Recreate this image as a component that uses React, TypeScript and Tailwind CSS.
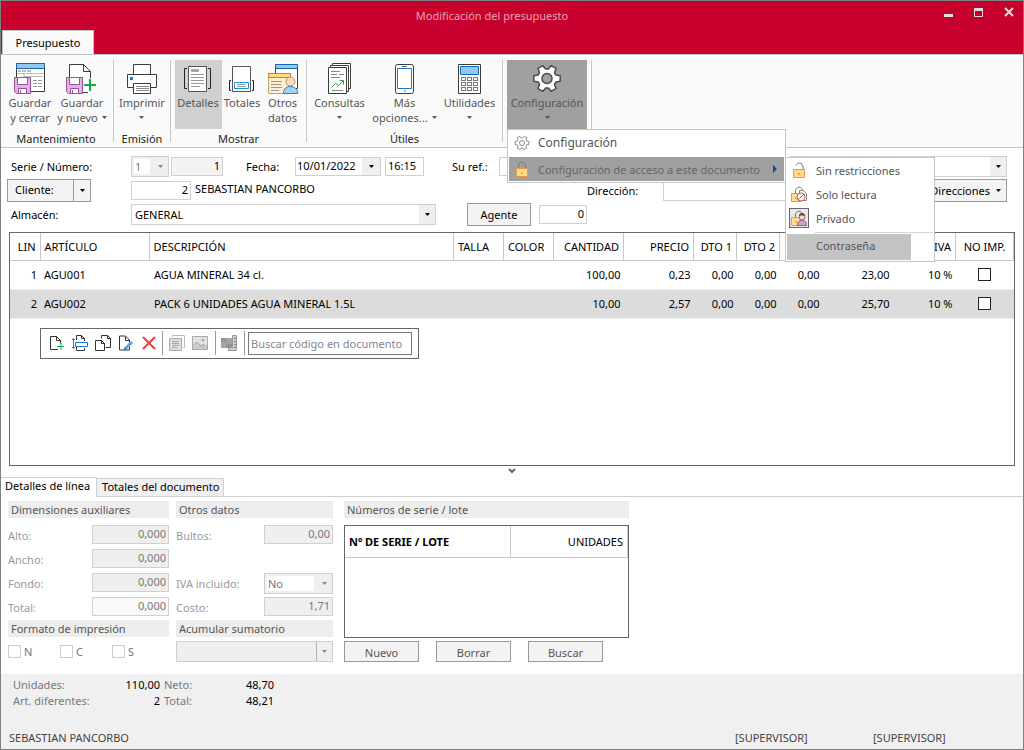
import type { ReactNode } from 'react';
import { clsx } from 'clsx';

/* ---------- shared data ---------- */

const LINES = [
  { lin: 1, code: 'AGU001', name: 'AGUA MINERAL 34 cl.', qty: '100,00', price: '0,23', total: '23,00' },
  { lin: 2, code: 'AGU002', name: 'PACK 6 UNIDADES AGUA MINERAL 1.5L', qty: '10,00', price: '2,57', total: '25,70' },
];

const DIMENSIONS = ['Alto:', 'Ancho:', 'Fondo:', 'Total:'];

function gearPath(cx: number, cy: number, outer: number, inner: number) {
  const points: string[] = [];
  for (let i = 0; i < 6; i++) {
    const steps = [
      [-22, inner],
      [-12, outer],
      [12, outer],
      [22, inner],
    ];
    steps.forEach(([offset, radius]) => {
      const a = ((i * 60 + offset) * Math.PI) / 180;
      points.push(`${(cx + radius * Math.cos(a)).toFixed(2)},${(cy + radius * Math.sin(a)).toFixed(2)}`);
    });
  }
  return `M${points.join('L')}Z`;
}

/* ---------- ribbon icons (32x32) ---------- */

function Icon({ children }: { children: ReactNode }) {
  return (
    <svg width="32" height="32" viewBox="0 0 32 32" fill="none" className="shrink-0" aria-hidden="true">
      {children}
    </svg>
  );
}

const Floppy = () => (
  <g stroke="#9b4f9f">
    <path d="M.5 15.5h16v16H2.5l-2-2z" fill="#dcb6dc" />
    <path d="M3.5 15.5h10v7h-10z" fill="#fff" />
    <path d="M4.5 26.5h8v5h-8z" fill="#fff" />
    <path d="M6.5 28v3" />
  </g>
);

const SaveCloseIcon = () => (
  <Icon>
    <path d="M2.5 1.5h28v28h-28z" fill="#fff" stroke="#3b3b3b" />
    <path d="M2.5 1.5h28v5h-28z" fill="#91c8f0" stroke="#1766ad" />
    <path d="M4 9h3M8 9h4M13 9h4" stroke="#777" />
    <path d="M3 11.5h27M10 11v4M10 14.5h19" stroke="#bbb" />
    <path d="M19 18.5h10M19 21.5h10M19 24.5h10" stroke="#999" strokeDasharray="4 1" />
    <Floppy />
  </Icon>
);

const SaveNewIcon = () => (
  <Icon>
    <path d="M3.5 30V2.5h14l7 7V30.5H10" fill="#fff" stroke="#3b3b3b" />
    <path d="M17.5 2.5v7h7z" fill="#fff" stroke="#3b3b3b" />
    <path d="M24 16v15M17 23.5h14" stroke="#fafafa" strokeWidth="4" />
    <Floppy />
    <path d="M24 17v12M18 23h12" stroke="#17a84b" strokeWidth="2" />
  </Icon>
);

const PrinterIcon = () => (
  <Icon>
    <g stroke="#3b3b3b" fill="#fff">
      <path d="M7.5 2.5h17v10h-17z" />
      <path d="M1.5 12.5h29v13h-29z" />
      <path d="M7.5 21.5h17v10h-17z" />
    </g>
    <path d="M4 15h3v3H4z" fill="#1979ca" />
    <path d="M10 24.5h13M10 26.5h13M10 28.5h13" stroke="#888" />
  </Icon>
);

const DetailsIcon = () => (
  <Icon>
    <path d="M6.5 4.5h18v25h-18z" fill="#fff" stroke="#555" />
    <path d="M5 6.5H2.5v20H5M26 6.5h2.5v20H26" stroke="#222" />
    <path d="M9 7h8v3H9z" fill="#aaa" />
    <path d="M9 12.5h13M9 15.5h13M9 18.5h13M9 21.5h13M9 24.5h9" stroke="#999" />
  </Icon>
);

const TotalsIcon = () => (
  <Icon>
    <path d="M6.5 4.5h18v25h-18z" fill="#fff" stroke="#555" />
    <path d="M5 18.5H3.5v10H5M26 18.5h1.5v10H26" stroke="#222" />
    <path d="M8.5 20.5h14v6h-14z" fill="#fff" stroke="#1b95d8" />
    <path d="M11 22.5h9M11 24.5h9" stroke="#999" />
  </Icon>
);

const OtherDataIcon = () => (
  <Icon>
    <path d="M8.5 2.5h22v24h-22z" fill="#fff" stroke="#3b3b3b" />
    <path d="M8.5 2.5h22v4h-22z" fill="#91c8f0" stroke="#1766ad" />
    <path d="M1.5 11.5h22v20h-22z" fill="#fdf0cf" stroke="#bba36d" />
    <path d="M1.5 11.5h22v4h-22z" fill="#ffd97c" stroke="#e0762a" />
    <path d="M4 19.5h11M4 22.5h10M4 25.5h11M4 28.5h8" stroke="#999" />
    <circle cx="23.5" cy="19.5" r="4.5" fill="#fbdcc0" stroke="#c08a63" />
    <path d="M16.5 31.5c0-5 3-7 7-7s7 2 7 7z" fill="#a5d1f0" stroke="#2b7dbd" />
  </Icon>
);

const QueriesIcon = () => (
  <Icon>
    <g stroke="#3b3b3b" fill="#fff">
      <path d="M8.5 1.5h18v25h-18z" />
      <path d="M6.5 3.5h18v26h-18z" />
      <path d="M4.5 5.5h18v26h-18z" />
    </g>
    <path d="M7 9.5h9M7 12.5h6M15 12.5h5M7 15.5h9M8 28.5h11" stroke="#888" />
    <path d="M7.5 25.5l4-4 3 2 5-5M15.5 18.5h4v4" stroke="#2fa336" />
  </Icon>
);

const PhoneIcon = () => (
  <Icon>
    <rect x="6.5" y="2.5" width="18" height="29" rx="2" fill="#fff" stroke="#3b3b3b" />
    <path d="M8.5 6.5h14v20h-14z" fill="#fff" stroke="#1979ca" />
    <path d="M13 4.5h5M15 29h2" stroke="#666" />
  </Icon>
);

const CalculatorIcon = () => (
  <Icon>
    <path d="M4.5 2.5h22v29h-22z" fill="#fff" stroke="#3b3b3b" />
    <path d="M6.5 4.5h18v8h-18z" fill="#91c8f0" stroke="#1766ad" />
    <g stroke="#777">
      {[15.5, 20.5, 25.5].map((y) =>
        [7.5, 13.5, 19.5].map((x) => <rect key={`${x}-${y}`} x={x} y={y} width="4" height="3" fill="#fff" />),
      )}
    </g>
  </Icon>
);

const GearIcon = () => (
  <Icon>
    <path d={gearPath(16, 16.5, 13.5, 9.5)} fill="#fff" stroke="#4a4a4a" strokeWidth="1.5" strokeLinejoin="round" />
    <circle cx="16" cy="16.5" r="5" fill="#a0a0a0" stroke="#4a4a4a" strokeWidth="1.5" />
  </Icon>
);

/* ---------- small icons (16x16) ---------- */

function SmallIcon({ children }: { children: ReactNode }) {
  return (
    <svg width="16" height="16" viewBox="0 0 16 16" fill="none" className="shrink-0" aria-hidden="true">
      {children}
    </svg>
  );
}

const SmallGear = () => (
  <SmallIcon>
    <path d={gearPath(8, 8, 7, 5)} fill="#fff" stroke="#8a8a8a" strokeLinejoin="round" />
    <circle cx="8" cy="8" r="2.5" stroke="#8a8a8a" />
  </SmallIcon>
);

const Lock = ({ open, small }: { open?: boolean; small?: boolean }) => (
  <g>
    <path
      d={open ? 'M5 3.5C6 0 12 0 12 5v3' : 'M4.5 8V5c0-5 7-5 7 0v3'}
      stroke="#777"
    />
    <path d={small ? 'M.5 7.5h10v8H.5z' : 'M2.5 7.5h11v8h-11z'} fill="#ffdc8b" stroke="#e89a4a" />
    <path d={small ? 'M5 11v2' : 'M8 11v2'} stroke="#d97b29" />
  </g>
);

const ReadOnlyIcon = () => (
  <SmallIcon>
    <Lock small />
    <path d="M8.5 4.5h4l3 3v7h-7z" fill="#fff" stroke="#888" />
    <circle cx="10" cy="11" r="4" fill="#fff" stroke="#dc5550" />
    <path d="M7 14l6-6" stroke="#dc5550" />
  </SmallIcon>
);

const PrivateIcon = () => (
  <SmallIcon>
    <Lock small />
    <path d="M6.5 15.5c0-4 2-5 4.5-5s4.5 1 4.5 5z" fill="#c9a0cf" stroke="#8b5a93" />
    <circle cx="11" cy="7" r="3" fill="#fbd9bd" stroke="#9c6b4a" />
    <path d="M8 6c0-4 6-4 6 0-2 0-3-1-3-1s-1 1-3 1z" fill="#4a4a4a" />
  </SmallIcon>
);

const Caret = ({ className }: { className?: string }) => (
  <svg width="5" height="3" viewBox="0 0 5 3" className={clsx('shrink-0 fill-current', className)} aria-hidden="true">
    <path d="M0 0h5L2.5 3z" />
  </svg>
);

/* ---------- ribbon ---------- */

interface RibbonButtonProps {
  icon: ReactNode;
  lines: string[];
  caret?: boolean;
  className?: string;
}

function RibbonButton({ icon, lines, caret, className }: RibbonButtonProps) {
  return (
    <button
      type="button"
      className={clsx('flex h-[69px] shrink-0 flex-col items-center gap-px pt-[2px] text-[#555]', className)}
    >
      {icon}
      <span className="flex flex-col items-center">
        <span className="h-[15px] whitespace-nowrap">{lines[0]}</span>
        <span className="flex h-[15px] items-center gap-1 whitespace-nowrap">
          {lines[1]}
          {caret && <Caret />}
        </span>
      </span>
    </button>
  );
}

function RibbonGroup({ label, className, children }: { label?: string; className: string; children: ReactNode }) {
  return (
    <section className={clsx('flex h-[82px] shrink-0 flex-col border-r border-[#c8c8c8]', className)}>
      <div className="flex justify-center">{children}</div>
      {label && <h2 className="pt-[2px] text-center text-[#222]">{label}</h2>}
    </section>
  );
}

function AccessMenu() {
  return (
    <ul className="absolute top-[27px] left-[277px] z-20 w-[150px] border border-[#c4c4c4] bg-white pb-px text-[#555]">
      <li>
        <button type="button" className="flex h-6 w-full items-center gap-[9px] pl-[5px]">
          <SmallIcon><Lock open /></SmallIcon>
          Sin restricciones
        </button>
      </li>
      <li>
        <button type="button" className="flex h-6 w-full items-center gap-[9px] pl-[5px]">
          <ReadOnlyIcon />
          Solo lectura
        </button>
      </li>
      <li>
        <button type="button" className="flex h-6 w-full items-center gap-[7px] pl-[3px]">
          <span className="flex h-5 w-5 items-center justify-center border border-[#666] bg-[#e9e9ec]">
            <PrivateIcon />
          </span>
          Privado
        </button>
      </li>
      <li className="pt-[2px] pl-[1px]">
        <hr className="mr-[1px] mb-[1px] ml-7 border-[#d4d4d4]" />
        <button type="button" className="block h-[26px] w-[124px] bg-[#c3c3c3] pb-1 pl-[29px] text-left">
          Contraseña
        </button>
      </li>
    </ul>
  );
}

function ConfigMenu() {
  return (
    <div className="absolute top-[69px] left-0 z-10 w-[279px] border border-[#c4c4c4] bg-white p-[1px] text-[#555]">
      <button type="button" className="mb-[2px] flex h-6 w-full items-center gap-2 pl-[5px] text-xs">
        <SmallGear />
        Configuración
      </button>
      <button type="button" className="flex h-6 w-full items-center gap-2 bg-[#a0a0a0] pl-[5px] text-[#666]">
        <SmallIcon><Lock /></SmallIcon>
        <span className="flex-1 text-left whitespace-nowrap">Configuración de acceso a este documento</span>
        <svg width="4" height="8" viewBox="0 0 4 8" className="mr-[7px]" aria-hidden="true">
          <path d="M0 0l4 4-4 4z" fill="#174a94" />
        </svg>
      </button>
      <AccessMenu />
    </div>
  );
}

function Ribbon() {
  return (
    <nav className="flex border-y border-[#c4c4c4] bg-[#fafafa] pt-[5px] pb-[5px]">
      <RibbonGroup label="Mantenimiento" className="w-[113px] pr-[2px]">
        <RibbonButton icon={<SaveCloseIcon />} lines={['Guardar', 'y cerrar']} className="w-[52px]" />
        <RibbonButton icon={<SaveNewIcon />} lines={['Guardar', 'y nuevo']} caret className="w-[52px]" />
      </RibbonGroup>
      <RibbonGroup label="Emisión" className="w-[57px]">
        <RibbonButton icon={<PrinterIcon />} lines={['Imprimir']} caret className="w-[56px]" />
      </RibbonGroup>
      <RibbonGroup label="Mostrar" className="w-[136px]">
        <RibbonButton icon={<DetailsIcon />} lines={['Detalles']} className="w-[47px] bg-[#d0d0d0]" />
        <RibbonButton icon={<TotalsIcon />} lines={['Totales']} className="w-[41px]" />
        <RibbonButton icon={<OtherDataIcon />} lines={['Otros', 'datos']} className="w-[40px]" />
      </RibbonGroup>
      <RibbonGroup label="Útiles" className="w-[196px]">
        <RibbonButton icon={<QueriesIcon />} lines={['Consultas']} caret className="w-[60px]" />
        <RibbonButton icon={<PhoneIcon />} lines={['Más', 'opciones...']} caret className="w-[70px]" />
        <RibbonButton icon={<CalculatorIcon />} lines={['Utilidades']} caret className="w-[60px]" />
      </RibbonGroup>
      <RibbonGroup className="w-[89px]">
        <div className="relative">
          <RibbonButton
            icon={<GearIcon />}
            lines={['Configuración']}
            caret
            className="w-[80px] bg-[#a0a0a0]"
          />
          <ConfigMenu />
        </div>
      </RibbonGroup>
    </nav>
  );
}

/* ---------- form controls ---------- */

interface TextBoxProps {
  id?: string;
  label?: string;
  value?: string;
  disabled?: boolean;
  className?: string;
}

function TextBox({ id, label, value = '', disabled, className }: TextBoxProps) {
  return (
    <input
      id={id}
      aria-label={label}
      defaultValue={value}
      disabled={disabled}
      className={clsx('h-[19px] min-w-0 border border-[#d0d0d0] px-[2px] pb-[2px] outline-none', className)}
    />
  );
}

interface DropDownProps {
  id?: string;
  label?: string;
  value?: string;
  disabled?: boolean;
  className?: string;
}

function DropDown({ id, label, value = '', disabled, className }: DropDownProps) {
  return (
    <div className={clsx('relative flex h-[21px] border border-[#d0d0d0]', disabled && 'bg-[#efefef]', className)}>
      <select
        id={id}
        aria-label={label}
        disabled={disabled}
        defaultValue={value}
        className={clsx(
          'h-full min-w-0 flex-1 appearance-none border-2 pl-[1px] outline-none disabled:opacity-100',
          disabled ? 'border-[#efefef]' : 'border-white',
          disabled && value ? 'bg-white text-[#777]' : 'bg-transparent',
        )}
      >
        <option>{value}</option>
      </select>
      <span
        className={clsx(
          'pointer-events-none flex w-4 items-center justify-center',
          disabled ? 'text-[#888]' : 'bg-[#efefef] text-black',
          disabled && !value && 'border-l border-[#b4b4b4]',
        )}
      >
        <Caret />
      </span>
    </div>
  );
}

function DocumentForm() {
  return (
    <form className="flex flex-col pt-[6px] pr-4 pl-[6px]">
      <div className="flex h-6 items-center">
        <label htmlFor="serie" className="w-[124px] pl-1">Serie / Número:</label>
        <DropDown id="serie" value="1" disabled className="w-[38px]" />
        <TextBox label="Número" value="1" className="ml-[2px] w-[52px] bg-[#f3f3f3] text-right" />
        <label htmlFor="fecha" className="ml-[23px] w-[49px]">Fecha:</label>
        <div className="flex h-[19px] w-[86px] border border-[#d0d0d0]">
          <input id="fecha" defaultValue="10/01/2022" className="w-0 flex-1 pb-[2px] pl-[1px] outline-none" />
          <button type="button" aria-label="Abrir calendario" className="flex w-[18px] items-center justify-center bg-[#efefef]">
            <Caret />
          </button>
        </div>
        <TextBox label="Hora" value="16:15" className="ml-1 w-[39px]" />
        <label htmlFor="ref" className="ml-7 w-[47px]">Su ref.:</label>
        <TextBox id="ref" className="mr-[10px] flex-1" />
        <DropDown label="Estado" className="w-[217px]" />
      </div>
      <div className="flex h-6 items-center">
        <div className="flex h-[23px] w-[84px] border border-[#999] bg-[#f3f3f3]">
          <button type="button" className="flex-1 border-r border-[#999] pb-[2px] pl-[7px] text-left">Cliente:</button>
          <button type="button" aria-label="Opciones de cliente" className="flex w-4 items-center justify-center">
            <Caret />
          </button>
        </div>
        <TextBox label="Código de cliente" value="2" className="ml-10 w-[60px] text-right" />
        <span className="ml-1 w-[392px] pb-1">SEBASTIAN PANCORBO</span>
        <label htmlFor="direccion" className="w-[76px]">Dirección:</label>
        <TextBox id="direccion" className="h-[22px] flex-1 border-[#999]" />
        <button type="button" className="flex h-[23px] items-center gap-[6px] border border-[#999] bg-[#f3f3f3] px-[5px]">
          Direcciones
          <Caret />
        </button>
      </div>
      <div className="flex h-[25px] items-center">
        <label htmlFor="almacen" className="w-[124px] pl-1">Almacén:</label>
        <DropDown id="almacen" value="GENERAL" className="w-[305px]" />
        <button type="button" className="ml-[31px] h-[23px] w-16 border border-[#999] bg-[#f3f3f3] pb-px">Agente</button>
        <TextBox label="Agente" value="0" className="ml-2 w-12 text-right" />
      </div>
    </form>
  );
}

/* ---------- document lines ---------- */

const HEAD = [
  { text: 'LIN', width: 'w-[30px]', align: 'text-right' },
  { text: 'ARTÍCULO', width: 'w-[109px]', align: 'text-left' },
  { text: 'DESCRIPCIÓN', width: '', align: 'text-left' },
  { text: 'TALLA', width: 'w-[50px]', align: 'text-left' },
  { text: 'COLOR', width: 'w-[50px]', align: 'text-left' },
  { text: 'CANTIDAD', width: 'w-[70px]', align: 'text-right' },
  { text: 'PRECIO', width: 'w-[70px]', align: 'text-right' },
  { text: 'DTO 1', width: 'w-[43px]', align: 'text-right' },
  { text: 'DTO 2', width: 'w-[43px]', align: 'text-right' },
  { text: '', width: 'w-[43px]', align: 'text-right' },
  { text: '', width: 'w-[70px]', align: 'text-right' },
  { text: 'IVA', width: 'w-[63px]', align: 'text-right' },
  { text: 'NO IMP.', width: 'w-[58px]', align: 'text-center' },
];

function LineToolbar() {
  return (
    <div className="mt-[9px] ml-[30px] flex h-[31px] w-fit items-center border border-[#666] pr-[6px] pl-2">
      <div className="flex gap-[7px]">
        <button type="button" aria-label="Añadir línea">
          <SmallIcon>
            <path d="M9 14.5H1.5v-13h6l4 4v3M7.5 1.5v4h4" stroke="#333" />
            <path d="M12 8v7M8 11.5h7" stroke="#17a84b" />
          </SmallIcon>
        </button>
        <button type="button" aria-label="Insertar línea">
          <SmallIcon>
            <path d="M4.5 5V.5h5l3 3V6M9.5.5v3h3M4.5 12v3.5h8V13" stroke="#333" />
            <path d="M3.5 7.5h12v4h-12z" fill="#fff" stroke="#1979ca" />
            <path d="M1.5 3v11M0 4.5h3M0 12.5h3" stroke="#17a84b" />
          </SmallIcon>
        </button>
        <button type="button" aria-label="Duplicar línea">
          <SmallIcon>
            <path d="M6.5 3.5v-3h6l3 3v9h-5M12.5.5v3h3" stroke="#333" />
            <path d="M.5 5.5h6l3 3v7h-9zM6.5 5.5v3h3" fill="#fff" stroke="#333" />
          </SmallIcon>
        </button>
        <button type="button" aria-label="Modificar línea">
          <SmallIcon>
            <path d="M11.5 12v3h-10v-14h6l4 4v2M7.5 1.5v4h4" stroke="#333" />
            <path d="M7 14l7-7" stroke="#58a6dc" strokeWidth="3" />
            <path d="M5.5 15.5l1-3 2 2z" fill="#1979ca" />
          </SmallIcon>
        </button>
        <button type="button" aria-label="Borrar línea">
          <SmallIcon>
            <path d="M2 2l12 12M14 2L2 14" stroke="#e8403a" strokeWidth="2" />
          </SmallIcon>
        </button>
      </div>
      <div className="ml-[5px] flex h-6 items-center gap-[7px] border-l border-[#999] pl-[6px]">
        <button type="button" aria-label="Texto ampliado">
          <SmallIcon>
            <path d="M3.5 2V.5h12v12H14" stroke="#bbb" />
            <path d="M.5 3.5h12v12H.5z" fill="#ddd" stroke="#aaa" />
            <path d="M3 6.5h7M3 8.5h7M3 10.5h7M3 12.5h5" stroke="#aaa" />
          </SmallIcon>
        </button>
        <button type="button" aria-label="Imagen">
          <SmallIcon>
            <path d="M.5 1.5h15v13H.5z" fill="#e4e4e4" stroke="#aaa" />
            <path d="M1 11l4-4 4 4 2-2 4 3v2H1z" fill="#ccc" />
            <path d="M1 10l4-3 7 7M9 11l2-2 4 3" stroke="#aaa" />
            <circle cx="11" cy="5" r="1.5" fill="#aaa" />
          </SmallIcon>
        </button>
      </div>
      <div className="ml-[7px] flex h-6 items-center border-l border-[#999] pr-[7px] pl-[5px]">
        <button type="button" aria-label="Medidas">
          <SmallIcon>
            <path d="M0 3h11v10H0z" fill="#a4a4a4" />
            <path d="M0 3h5v4H0zM5 9h6v4H5z" fill="#939393" />
            <path d="M11.5.5h4v15h-8v-3h4z" fill="#ccc" stroke="#999" />
            <path d="M13 3.5h2M13 6.5h2M13 9.5h2M13 12.5h2" stroke="#888" />
          </SmallIcon>
        </button>
      </div>
      <div className="flex h-6 items-center border-l border-[#999] pl-[3px]">
        <input
          aria-label="Buscar código en documento"
          placeholder="Buscar código en documento"
          className="h-[23px] w-[164px] border border-[#777] px-[2px] outline-none placeholder:text-[#7f8792]"
        />
      </div>
    </div>
  );
}

function LinesGrid() {
  return (
    <div className="mr-2 ml-2 flex min-h-[234px] flex-1 flex-col border border-[#666] bg-white">
      <table className="w-full table-fixed border-collapse">
        <thead>
          <tr className="h-[27px]">
            {HEAD.map((col, i) => (
              <th
                key={i}
                className={clsx(
                  'border-r border-b border-[#c8c8c8] px-1 font-normal whitespace-nowrap',
                  col.width,
                  col.align,
                )}
              >
                {col.text}
              </th>
            ))}
          </tr>
        </thead>
        <tbody>
          {LINES.map((line) => (
            <tr key={line.lin} className="h-[29px] border-b border-[#ececec] text-right even:bg-[#dcdcdc]">
              <td className="px-[3px]">{line.lin}</td>
              <td className="px-1 text-left">{line.code}</td>
              <td className="px-[5px] text-left">{line.name}</td>
              <td />
              <td />
              <td className="px-[3px]">{line.qty}</td>
              <td className="px-[3px]">{line.price}</td>
              <td className="px-[3px]">0,00</td>
              <td className="px-[3px]">0,00</td>
              <td className="px-[3px]">0,00</td>
              <td className="px-[3px]">{line.total}</td>
              <td className="px-[3px]">10 %</td>
              <td className="text-center">
                <input
                  type="checkbox"
                  aria-label={`No imprimir línea ${line.lin}`}
                  className="mb-[2px] h-[13px] w-[13px] appearance-none border border-[#222] bg-white align-middle"
                />
              </td>
            </tr>
          ))}
        </tbody>
      </table>
      <LineToolbar />
    </div>
  );
}

/* ---------- line details ---------- */

function SectionTitle({ children }: { children: ReactNode }) {
  return <h3 className="h-[17px] bg-[#ededed] pl-[3px] leading-[17px] text-[#555]">{children}</h3>;
}

function LineDetails() {
  return (
    <section className="flex bg-white pt-1 pb-3 pl-[7px] text-[#9a9a9a]">
      <div className="w-[161px]">
        <SectionTitle>Dimensiones auxiliares</SectionTitle>
        <div className="flex flex-col gap-[5px] pt-[7px] pb-1">
          {DIMENSIONS.map((name) => (
            <div key={name} className="flex justify-between">
              <label htmlFor={name} className="pt-[3px]">{name}</label>
              <TextBox
                id={name}
                value="0,000"
                className={clsx('w-[77px] text-right text-[#777]', name === 'Total:' ? 'bg-[#fafafa]' : 'bg-[#efefef]')}
              />
            </div>
          ))}
        </div>
        <SectionTitle>Formato de impresión</SectionTitle>
        <div className="flex pt-[7px]">
          {['N', 'C', 'S'].map((name) => (
            <label key={name} className="flex w-[52px] items-center gap-[3px] text-[#777]">
              <input type="checkbox" className="h-[13px] w-[13px] appearance-none border border-[#ccc] bg-white" />
              {name}
            </label>
          ))}
        </div>
      </div>

      <div className="ml-[7px] w-[157px]">
        <SectionTitle>Otros datos</SectionTitle>
        <div className="flex flex-col gap-[29px] pt-[7px]">
          <div className="flex justify-between">
            <label htmlFor="bultos" className="pt-[3px]">Bultos:</label>
            <TextBox id="bultos" value="0,00" className="w-[69px] bg-[#efefef] text-right text-[#777]" />
          </div>
          <div className="flex justify-between">
            <label htmlFor="iva" className="pt-[3px]">IVA incluido:</label>
            <DropDown id="iva" value="No" disabled className="w-[69px]" />
          </div>
        </div>
        <div className="flex justify-between pt-[3px] pb-1">
          <label htmlFor="costo" className="pt-[3px]">Costo:</label>
          <TextBox id="costo" value="1,71" className="w-[69px] bg-[#efefef] text-right text-[#777]" />
        </div>
        <SectionTitle>Acumular sumatorio</SectionTitle>
        <DropDown label="Acumular sumatorio" disabled className="mt-1" />
      </div>

      <div className="ml-[11px] w-[285px]">
        <SectionTitle>Números de serie / lote</SectionTitle>
        <div className="mt-[7px] h-[113px] border border-[#666]">
          <table className="w-full table-fixed border-collapse text-black">
            <thead>
              <tr className="h-[31px]">
                <th className="w-[165px] border-r border-b border-[#c8c8c8] px-1 text-left font-bold">
                  Nº DE SERIE / LOTE
                </th>
                <th className="border-r border-b border-[#c8c8c8] px-1 text-right font-normal">UNIDADES</th>
              </tr>
            </thead>
          </table>
        </div>
        <div className="flex gap-[17px] pt-[3px] text-[#555]">
          {['Nuevo', 'Borrar', 'Buscar'].map((name) => (
            <button key={name} type="button" className="h-[21px] w-[75px] border border-[#999] bg-[#f3f3f3] pt-px">
              {name}
            </button>
          ))}
        </div>
      </div>
    </section>
  );
}

function DetailTabs() {
  return (
    <div role="tablist" className="flex h-[20px] items-end border-b border-[#d0d0d0] bg-white">
      <button
        type="button"
        role="tab"
        aria-selected="true"
        className="-mb-px flex h-[20px] items-start border-t border-r border-[#d0d0d0] bg-white pr-[6px] pl-1 whitespace-nowrap"
      >
        Detalles de línea
      </button>
      <button
        type="button"
        role="tab"
        aria-selected="false"
        className="flex h-[18px] items-start border-t border-r border-[#d0d0d0] bg-[#f0f0f0] pr-1 pl-[5px] whitespace-nowrap"
      >
        Totales del documento
      </button>
    </div>
  );
}

/* ---------- window ---------- */

function TitleBar() {
  return (
    <header className="bg-[#c8002d]">
      <div className="flex h-[29px]">
        <h1 className="flex-1 pt-[7px] pl-[60px] text-center text-[#e9a3b0]">Modificación del presupuesto</h1>
        <div className="flex w-[100px] items-start justify-end gap-5 pt-[6px] pr-[9px]">
          {[
            { name: 'Minimizar', shape: <path d="M0 8.5h9" stroke="#dedede" strokeWidth="3" /> },
            { name: 'Maximizar', shape: <path d="M.5 2v7.5h8V2M0 2.5h9" stroke="#dedede" strokeWidth="1" /> },
            { name: 'Cerrar', shape: <path d="M1 1l8 8M9 1L1 9" stroke="#dedede" strokeWidth="2" /> },
          ].map((control) => (
            <button key={control.name} type="button" aria-label={control.name}>
              <svg width="10" height="10" viewBox="0 0 10 10" fill="none">
                {control.name === 'Maximizar' && <path d="M0 2.5h9" stroke="#dedede" strokeWidth="3" />}
                {control.shape}
              </svg>
            </button>
          ))}
        </div>
      </div>
      <div className="flex pl-[1px]">
        <button
          type="button"
          className="-mb-px h-[25px] w-[92px] border border-b-0 border-[#c4c4c4] bg-[#fafafa] pb-[2px] text-black"
        >
          Presupuesto
        </button>
      </div>
    </header>
  );
}

function StatusBar() {
  return (
    <footer className="flex h-[75px] flex-col justify-between bg-[#f0f0f0] px-2 pt-[3px] pb-[3px]">
      <dl className="grid w-fit grid-cols-[90px_53px_45px_61px] gap-x-1 pl-1 leading-4">
        <dt className="text-[#777]">Unidades:</dt>
        <dd className="text-right">110,00</dd>
        <dt className="text-[#777]">Neto:</dt>
        <dd className="text-right">48,70</dd>
        <dt className="text-[#777]">Art. diferentes:</dt>
        <dd className="text-right">2</dd>
        <dt className="text-[#777]">Total:</dt>
        <dd className="text-right">48,21</dd>
      </dl>
      <div className="flex leading-4 text-[#444]">
        <span className="flex-1">SEBASTIAN PANCORBO</span>
        <span className="w-[138px]">[SUPERVISOR]</span>
        <span className="w-[142px]">[SUPERVISOR]</span>
      </div>
    </footer>
  );
}

export default function App() {
  return (
    <main className="flex min-h-screen flex-col border border-[#808080] bg-white font-['Noto_Sans',sans-serif] text-[11px] leading-[15px] text-black">
      <TitleBar />
      <Ribbon />
      <DocumentForm />
      <div className="h-[5px]" />
      <LinesGrid />
      <button type="button" aria-label="Contraer panel" className="mx-auto flex h-[11px] w-6 justify-center pt-[2px]">
        <svg width="8" height="6" viewBox="0 0 8 6" fill="none">
          <path d="M1 1l3 3 3-3" stroke="#666" strokeWidth="2" />
        </svg>
      </button>
      <DetailTabs />
      <LineDetails />
      <StatusBar />
    </main>
  );
}
